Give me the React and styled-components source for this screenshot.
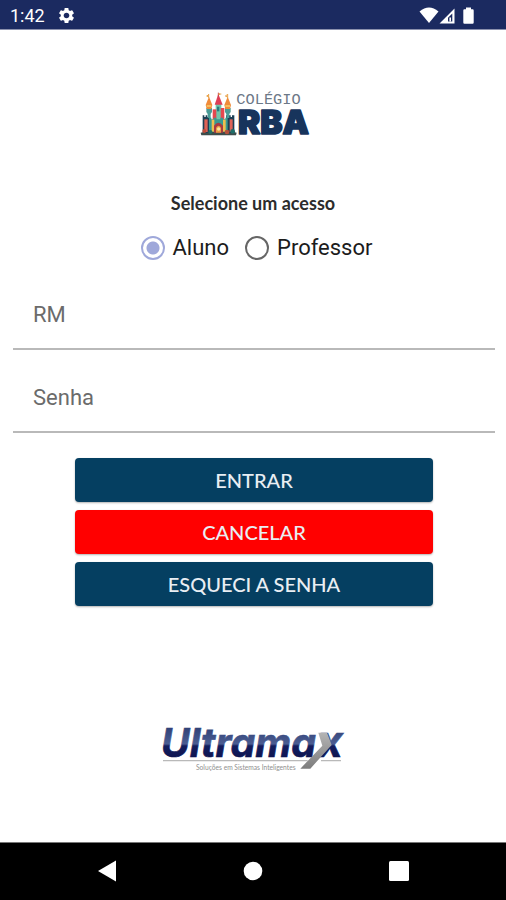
import React, { useState } from 'react';
import styled, { createGlobalStyle } from 'styled-components';
import { MdSettings } from 'react-icons/md';

const GlobalStyle = createGlobalStyle`
  * {
    box-sizing: border-box;
  }

  body {
    margin: 0;
    background: #ffffff;
    font-family: Roboto, "Liberation Sans", sans-serif;
  }
`;

const Page = styled.div`
  display: flex;
  flex-direction: column;
  min-height: 100vh;
`;

const StatusBar = styled.header`
  display: flex;
  align-items: center;
  justify-content: space-between;
  height: 30px;
  padding: 2px 32px 0 10px;
  background: #1b2a60;
  border-bottom: 1px solid #8b91ad;
  color: #ffffff;
`;

const StatusGroup = styled.div`
  display: flex;
  align-items: center;
  gap: ${(props) => props.$gap}px;
`;

const Clock = styled.span`
  font-size: 18px;
  line-height: 24px;
`;

const Content = styled.main`
  flex: 1;
  display: flex;
  flex-direction: column;
  align-items: center;
  padding-top: 50px;
`;

const Logo = styled.svg`
  display: block;
`;

const Form = styled.form`
  display: flex;
  flex-direction: column;
  width: 100%;
  margin-top: 46px;
`;

const AccessGroup = styled.fieldset`
  display: flex;
  flex-direction: column;
  align-items: center;
  margin: 0;
  padding: 0;
  border: none;
`;

const AccessTitle = styled.legend`
  width: 100%;
  padding: 0;
  text-align: center;
  font-family: Lato, sans-serif;
  font-weight: 700;
  font-size: 18px;
  line-height: 24px;
  color: #2c2c2c;
`;

const AccessOptions = styled.div`
  display: flex;
  gap: 16px;
  margin-top: 17px;
  padding-left: 7px;
`;

const Option = styled.label`
  display: flex;
  align-items: center;
  gap: 8px;
  font-size: 22px;
  line-height: 32px;
  color: #1c1c1c;
`;

const Radio = styled.input`
  appearance: none;
  width: 24px;
  height: 24px;
  margin: 0;
  border: 2px solid #666666;
  border-radius: 50%;

  &:checked {
    border-color: #9fa8da;
    background: radial-gradient(circle, #9fa8da 6px, transparent 7px);
  }
`;

const Fields = styled.div`
  display: flex;
  flex-direction: column;
  gap: 13px;
  margin-top: 16px;
  padding: 0 11px 0 13px;
`;

const TextField = styled.input`
  width: 100%;
  height: 70px;
  padding: 0 20px;
  border: none;
  border-bottom: 2px solid #b9b9b9;
  border-radius: 0;
  background: transparent;
  font-family: inherit;
  font-size: 22px;
  color: #1c1c1c;

  &::placeholder {
    color: #6b6b6b;
    opacity: 1;
  }

  &:focus {
    outline: none;
    border-bottom-color: #053f61;
  }
`;

const Actions = styled.div`
  display: flex;
  flex-direction: column;
  gap: 8px;
  margin-top: 25px;
  padding: 0 73px 0 75px;
`;

const Button = styled.button`
  height: 44px;
  border: none;
  border-radius: 4px;
  background: ${(props) => props.$background};
  box-shadow: 0 1px 2px rgba(0, 0, 0, 0.3);
  color: #e9eef3;
  font-family: Lato, sans-serif;
  font-weight: 500;
  font-size: 20px;
  line-height: 24px;
  text-transform: uppercase;
  cursor: pointer;
`;

const Footer = styled.footer`
  margin-top: auto;
  padding-bottom: 62px;
`;

const NavBar = styled.nav`
  display: flex;
  align-items: center;
  justify-content: space-around;
  height: 58px;
  padding: 0 34px 2px;
  background: #000000;
  border-top: 1px solid #777777;
`;

const NavButton = styled.button`
  display: flex;
  align-items: center;
  justify-content: center;
  width: 48px;
  height: 48px;
  padding: 0;
  border: none;
  background: none;
  cursor: pointer;
`;

const WifiIcon = () => (
  <svg width="20" height="17" viewBox="0 0 20 17" aria-hidden="true">
    <path d="M0.5 4.5 Q10 -3.5 19.5 4.5 L10 16 Z" fill="#ffffff" />
  </svg>
);

const SignalIcon = () => (
  <svg width="16" height="16" viewBox="0 0 16 16" aria-hidden="true">
    <path
      d="M15.5 0.5 V15.5 H0.5 Z M13.3 5.4 L9 9.7 V13.4 H13.3 Z"
      fill="#ffffff"
      fillRule="evenodd"
    />
    <path d="M10.4 9.4 h1.6 v4 h-1.6 z" fill="#ffffff" />
  </svg>
);

const BatteryIcon = () => (
  <svg width="11" height="17" viewBox="0 0 11 17" aria-hidden="true">
    <path
      d="M3 0.5 H8 V2.2 H9.6 Q10.7 2.2 10.7 3.4 V15.5 Q10.7 16.7 9.6 16.7 H1.4 Q0.3 16.7 0.3 15.5 V3.4 Q0.3 2.2 1.4 2.2 H3 Z"
      fill="#ffffff"
    />
  </svg>
);

const SchoolLogo = () => (
  <Logo width="126" height="65" viewBox="0 0 378 195" role="img" aria-label="Colégio RBA">
    {/* chão */}
    <path d="M32 158 Q60 150 85 153 Q115 149 140 158 L138 166 H34 Z" fill="#3e4d4b" />
    {/* torres de fora */}
    <path d="M38 106 h5 v5 h4 v-5 h5 v5 h4 v-5 h4 v52 h-22 z" fill="#1d3f55" />
    <path d="M108 106 h5 v5 h4 v-5 h5 v5 h4 v-5 h7 v52 h-25 z" fill="#1d3f55" />
    <path d="M43 118 h10 v38 h-10 z" fill="#df6256" />
    <path d="M119 118 h9 v38 h-9 z" fill="#df6256" />
    {/* torres laranja */}
    <path d="M49 84 h17 v12 l-4 6 v12 h-9 v-12 l-4 -6 z" fill="#4a9c97" />
    <path d="M105 84 h17 v12 l-4 6 v12 h-9 v-12 l-4 -6 z" fill="#4a9c97" />
    <path d="M57 50 L67 75 L64 87 H50 L47 75 Z" fill="#f08b3a" />
    <path d="M113 50 L123 75 L120 87 H106 L103 75 Z" fill="#f08b3a" />
    <path d="M56 42 v12 M57 44 l-7 4 l7 3 M113 42 v12 M112 44 l-6 4 l6 3" stroke="#e9a34a" strokeWidth="3" fill="none" />
    <path d="M50 78 h14 M106 78 h14" stroke="#f7cf68" strokeWidth="4" />
    {/* torre central */}
    <path d="M77 70 h17 v84 h-17 z" fill="#71c5aa" />
    <path d="M85 42 L98 74 H74 Z" fill="#df3e55" />
    <path d="M85 38 v12" stroke="#c63c4b" strokeWidth="3" />
    <path d="M86 39 l10 3 l-10 4 z" fill="#e6a84a" />
    <path d="M68 88 h11 v35 h-11 z" fill="#e5474f" />
    <path d="M92 84 h11 v39 h-11 z" fill="#e5474f" />
    <path d="M81 80 h7 v14 h-7 z" fill="#287b80" />
    {/* muralha e portão */}
    <path d="M57 113 h7 v5 h7 v-5 h8 v5 h12 v-5 h8 v5 h7 v-5 h7 v42 h-56 z" fill="#399a91" />
    <path d="M65 119 h8 v36 h-8 z" fill="#f1bd4d" />
    <path d="M99 119 h8 v36 h-8 z" fill="#f1bd4d" />
    <path d="M72 158 V137 Q85 120 99 137 V158 Z" fill="#a83a42" />
    <path d="M78 158 V143 Q86 132 93 143 V158 Z" fill="#e89b43" />
    <circle cx="86" cy="147" r="5" fill="#f8e6a1" />
    {/* arbustos */}
    <circle cx="43" cy="153" r="6" fill="#bf4d39" />
    <circle cx="61" cy="156" r="6" fill="#226f65" />
    <circle cx="111" cy="156" r="7" fill="#b4513c" />
    <circle cx="128" cy="154" r="7" fill="#1f6e69" />
    <text x="139" y="72" fill="#6c7887" fontFamily="Liberation Mono, monospace" fontSize="46">
      COLÉGIO
    </text>
    <text
      x="144"
      y="163"
      fill="#17345c"
      stroke="#17345c"
      strokeWidth="5"
      strokeLinejoin="round"
      fontFamily="Inter, sans-serif"
      fontWeight="900"
      fontSize="100"
    >
      RBA
    </text>
  </Logo>
);

const UltramaxLogo = () => (
  <Logo width="205" height="65" viewBox="0 0 615 195" role="img" aria-label="Ultramax - Soluções em Sistemas Inteligentes">
    <defs>
      <linearGradient id="ultramax" gradientUnits="userSpaceOnUse" x1="0" y1="30" x2="0" y2="128">
        <stop offset="0" stopColor="#2c3c72" />
        <stop offset="0.58" stopColor="#4b5d92" />
        <stop offset="0.64" stopColor="#141d5c" />
        <stop offset="1" stopColor="#0e1552" />
      </linearGradient>
      <linearGradient id="swoosh" x1="0" y1="0" x2="0" y2="1">
        <stop offset="0" stopColor="#b4b4b4" />
        <stop offset="1" stopColor="#7d7d7d" />
      </linearGradient>
    </defs>
    <path d="M36 137 H470 M510 137 H570" stroke="#b9b9b9" strokeWidth="4" />
    <text
      x="30"
      y="127"
      fill="url(#ultramax)"
      stroke="url(#ultramax)"
      strokeWidth="2"
      fontFamily="Inter, sans-serif"
      fontStyle="italic"
      fontWeight="700"
      fontSize="118"
    >
      Ultrama
      <tspan x="500" fontSize="130">x</tspan>
    </text>
    <path d="M502 53 H528 L542 90 L478 161 H448 L514 92 Z" fill="url(#swoosh)" />
    <text x="135" y="165" fill="#909090" fontFamily="Lato, sans-serif" fontSize="20">
      Soluções em Sistemas Inteligentes
    </text>
  </Logo>
);

const App = () => {
  const [acesso, setAcesso] = useState('aluno');
  const [rm, setRm] = useState('');
  const [senha, setSenha] = useState('');

  const handleSubmit = (e) => {
    e.preventDefault();
  };

  const handleCancelar = () => {
    setRm('');
    setSenha('');
  };

  return (
    <Page>
      <GlobalStyle />
      <StatusBar>
        <StatusGroup $gap={12}>
          <Clock>1:42</Clock>
          <MdSettings size={19} aria-hidden="true" />
        </StatusGroup>
        <StatusGroup $gap={0}>
          <WifiIcon />
          <StatusGroup $gap={8}>
            <SignalIcon />
            <BatteryIcon />
          </StatusGroup>
        </StatusGroup>
      </StatusBar>

      <Content>
        <SchoolLogo />
        <Form onSubmit={handleSubmit}>
          <AccessGroup>
            <AccessTitle>Selecione um acesso</AccessTitle>
            <AccessOptions>
              <Option>
                <Radio
                  type="radio"
                  name="acesso"
                  checked={acesso === 'aluno'}
                  onChange={() => setAcesso('aluno')}
                />
                Aluno
              </Option>
              <Option>
                <Radio
                  type="radio"
                  name="acesso"
                  checked={acesso === 'professor'}
                  onChange={() => setAcesso('professor')}
                />
                Professor
              </Option>
            </AccessOptions>
          </AccessGroup>

          <Fields>
            <TextField
              type="text"
              placeholder="RM"
              aria-label="RM"
              value={rm}
              onChange={(e) => setRm(e.target.value)}
            />
            <TextField
              type="password"
              placeholder="Senha"
              aria-label="Senha"
              value={senha}
              onChange={(e) => setSenha(e.target.value)}
            />
          </Fields>

          <Actions>
            <Button type="submit" $background="#053f61">Entrar</Button>
            <Button type="button" $background="#ff0000" onClick={handleCancelar}>Cancelar</Button>
            <Button type="button" $background="#053f61">Esqueci a senha</Button>
          </Actions>
        </Form>

        <Footer>
          <UltramaxLogo />
        </Footer>
      </Content>

      <NavBar>
        <NavButton type="button" aria-label="Voltar">
          <svg width="20" height="22" viewBox="0 0 20 22">
            <path d="M19 0.5 V21.5 L1 11 Z" fill="#ffffff" />
          </svg>
        </NavButton>
        <NavButton type="button" aria-label="Início">
          <svg width="20" height="20" viewBox="0 0 20 20">
            <circle cx="10" cy="10" r="9.3" fill="#ffffff" />
          </svg>
        </NavButton>
        <NavButton type="button" aria-label="Recentes">
          <svg width="20" height="20" viewBox="0 0 20 20">
            <rect width="20" height="20" rx="1.5" fill="#ffffff" />
          </svg>
        </NavButton>
      </NavBar>
    </Page>
  );
};

export default App;
